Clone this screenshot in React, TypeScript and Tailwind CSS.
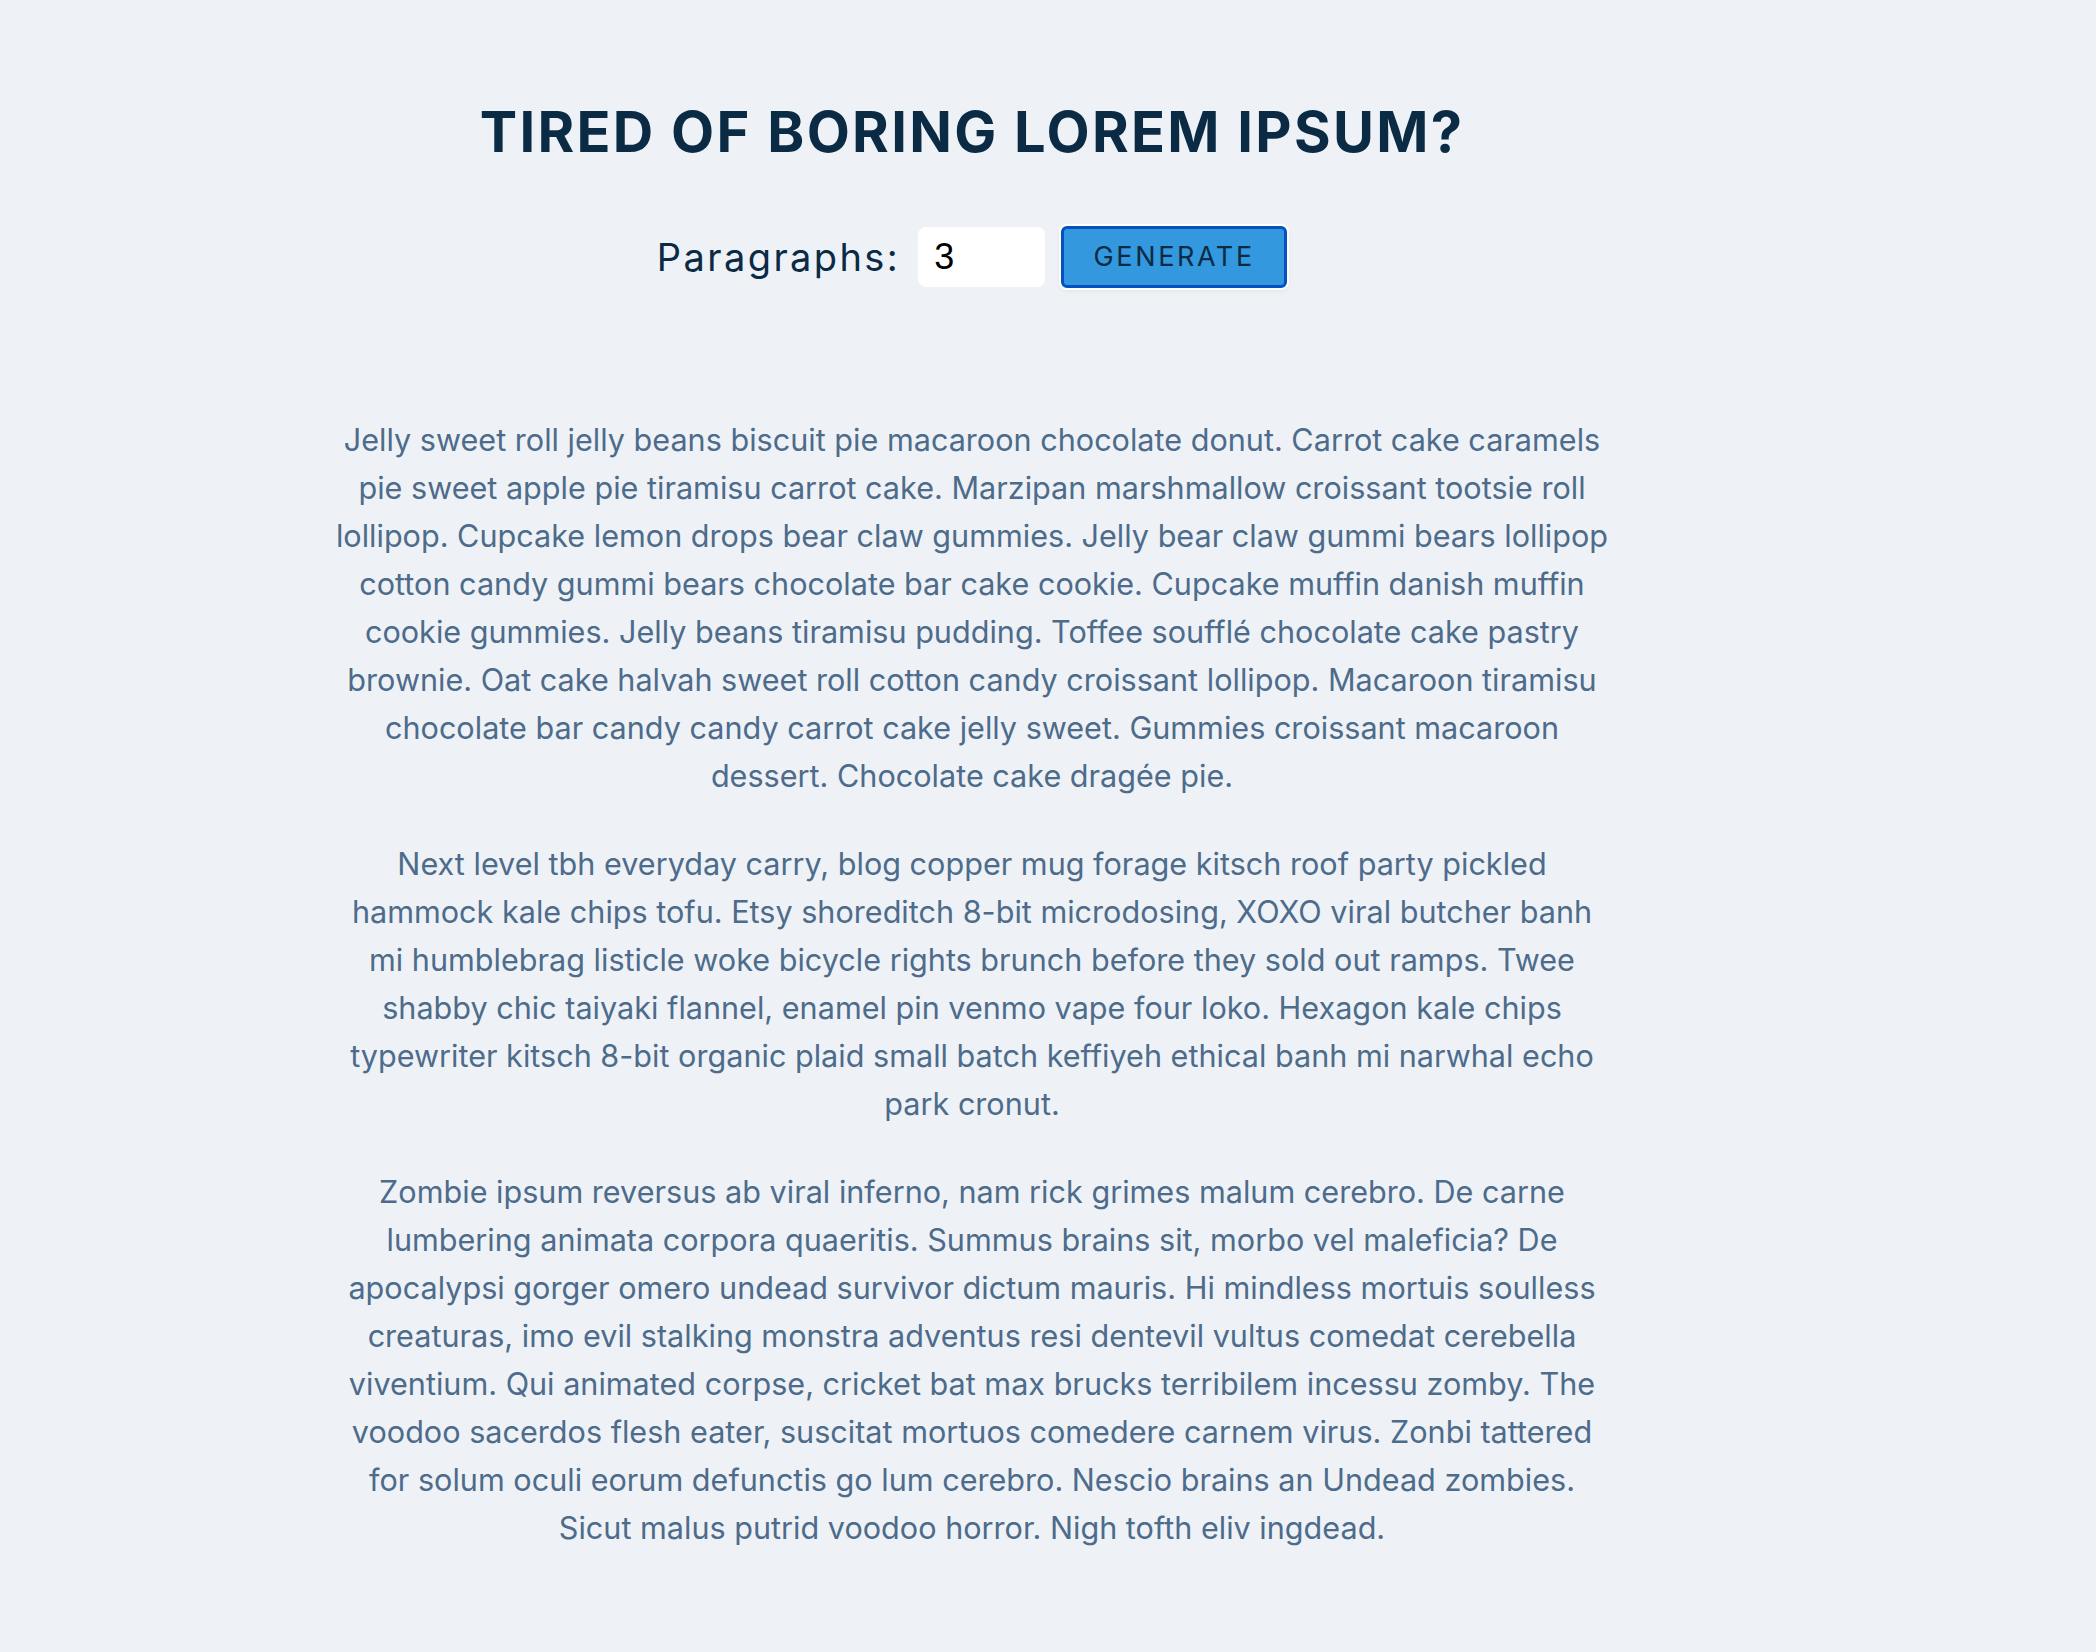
import { useState } from "react";

const paragraphs = [
  "Jelly sweet roll jelly beans biscuit pie macaroon chocolate donut. Carrot cake caramels pie sweet apple pie tiramisu carrot cake. Marzipan marshmallow croissant tootsie roll lollipop. Cupcake lemon drops bear claw gummies. Jelly bear claw gummi bears lollipop cotton candy gummi bears chocolate bar cake cookie. Cupcake muffin danish muffin cookie gummies. Jelly beans tiramisu pudding. Toffee soufflé chocolate cake pastry brownie. Oat cake halvah sweet roll cotton candy croissant lollipop. Macaroon tiramisu chocolate bar candy candy carrot cake jelly sweet. Gummies croissant macaroon dessert. Chocolate cake dragée pie.",
  "Next level tbh everyday carry, blog copper mug forage kitsch roof party pickled hammock kale chips tofu. Etsy shoreditch 8-bit microdosing, XOXO viral butcher banh mi humblebrag listicle woke bicycle rights brunch before they sold out ramps. Twee shabby chic taiyaki flannel, enamel pin venmo vape four loko. Hexagon kale chips typewriter kitsch 8-bit organic plaid small batch keffiyeh ethical banh mi narwhal echo park cronut.",
  "Zombie ipsum reversus ab viral inferno, nam rick grimes malum cerebro. De carne lumbering animata corpora quaeritis. Summus brains sit, morbo vel maleficia? De apocalypsi gorger omero undead survivor dictum mauris. Hi mindless mortuis soulless creaturas, imo evil stalking monstra adventus resi dentevil vultus comedat cerebella viventium. Qui animated corpse, cricket bat max brucks terribilem incessu zomby. The voodoo sacerdos flesh eater, suscitat mortuos comedere carnem virus. Zonbi tattered for solum oculi eorum defunctis go lum cerebro. Nescio brains an Undead zombies. Sicut malus putrid voodoo horror. Nigh tofth eliv ingdead.",
];

export default function App() {
  const [count, setCount] = useState("3");

  return (
    <div className="min-h-screen bg-[#eef2f7] pr-[152px] font-['Inter',sans-serif]">
      <section className="mx-auto w-[1282px] pt-[100px] text-center">
        <h1 className="text-[56px] font-bold uppercase leading-[64px] tracking-[2.3px] text-[#0b2b45]">
          Tired of boring lorem ipsum?
        </h1>

        <form className="mt-[62px] flex items-center justify-center gap-[16px]" onSubmit={(e) => e.preventDefault()}>
          <label htmlFor="amount" className="mr-[2px] text-[38px] tracking-[2.4px] text-[#0b2b45]">
            Paragraphs:
          </label>
          <input
            id="amount"
            type="text"
            value={count}
            onChange={(e) => setCount(e.target.value)}
            className="h-[60px] w-[127px] rounded-lg bg-white px-[16px] font-['Liberation_Sans',sans-serif] text-[36px] text-black outline-none"
          />
          <button
            type="submit"
            className="h-[62px] w-[226px] rounded-md border-[3px] border-[#0452c2] bg-[#3398dd] text-[27px] uppercase tracking-[2.6px] text-[#0b2b45] shadow-[0_0_0_2px_#fff,0_2px_6px_rgba(0,0,0,0.08)]"
          >
            Generate
          </button>
        </form>

        <article className="mt-[128px]">
          {paragraphs.map((p) => (
            <p key={p.slice(0, 12)} className="mb-[40px] text-[30.6px] leading-[48px] text-[#4d6b8a]">
              {p}
            </p>
          ))}
        </article>
      </section>
    </div>
  );
}
